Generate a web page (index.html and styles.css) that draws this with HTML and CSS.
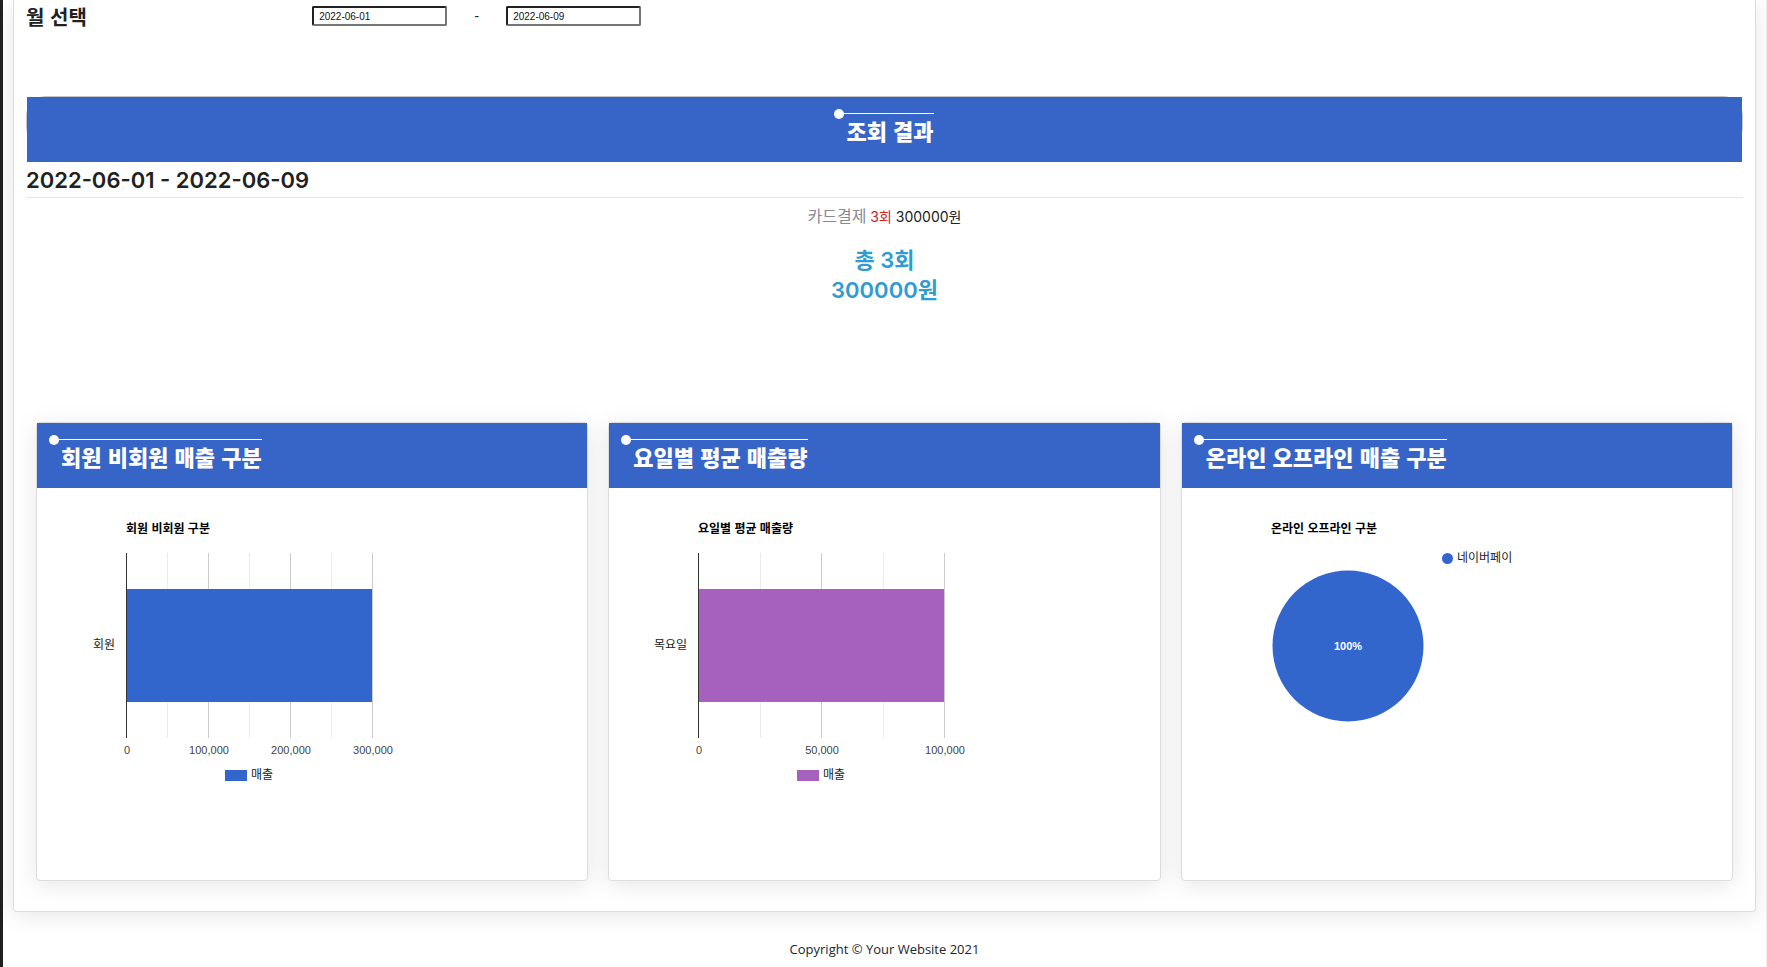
FILE: index.html
```html
<!DOCTYPE html>
<html lang="ko">
<head>
<meta charset="utf-8">
<title>조회 결과</title>
<link rel="stylesheet" href="styles.css">
</head>
<body>
<div class="rail"></div>
<div class="page">
  <main class="panel">
    <form class="month-row">
      <label class="month-label" for="from">월 선택</label>
      <div class="range">
        <input class="date-input" id="from" type="text" value="2022-06-01">
        <span class="range-dash">-</span>
        <input class="date-input" id="to" type="text" value="2022-06-09" aria-label="종료일">
      </div>
    </form>

    <section class="result">
      <div class="banner"><h2 class="title">조회 결과</h2></div>
      <h3 class="period">2022-06-01 - 2022-06-09</h3>
      <p class="detail"><span class="method">카드결제</span> <span class="count">3회</span> <span>300000원</span></p>
      <p class="total">총 3회<br>300000원</p>
    </section>

    <section class="cards">
      <article class="card">
        <div class="card-head"><h2 class="title">회원 비회원 매출 구분</h2></div>
        <div class="card-body">
          <svg class="chart" width="400" height="300" viewBox="0 0 400 300">
            <text class="chart-title" x="73" y="29">회원 비회원 구분</text>
            <path class="minor" d="M114.500 49V234M196.500 49V234M278.500 49V234"/>
            <path class="major" d="M155.500 49V234M237.500 49V234M319.500 49V234"/>
            <rect class="blue" x="74" y="85" width="245" height="113"/>
            <path class="axis" d="M73.500 49V234"/>
            <text class="label end" x="62" y="145">회원</text>
            <text class="tick" x="74" y="250">0</text>
            <text class="tick" x="156" y="250">100,000</text>
            <text class="tick" x="238" y="250">200,000</text>
            <text class="tick" x="320" y="250">300,000</text>
            <rect class="blue" x="172" y="266" width="22" height="11"/>
            <text class="label" x="198" y="275">매출</text>
          </svg>
        </div>
      </article>
      <article class="card">
        <div class="card-head"><h2 class="title">요일별 평균 매출량</h2></div>
        <div class="card-body">
          <svg class="chart" width="400" height="300" viewBox="0 0 400 300">
            <text class="chart-title" x="73" y="29">요일별 평균 매출량</text>
            <path class="minor" d="M135.500 49V234M258.500 49V234"/>
            <path class="major" d="M196.500 49V234M319.500 49V234"/>
            <rect class="purple" x="74" y="85" width="245" height="113"/>
            <path class="axis" d="M73.500 49V234"/>
            <text class="label end" x="62" y="145">목요일</text>
            <text class="tick" x="74" y="250">0</text>
            <text class="tick" x="197" y="250">50,000</text>
            <text class="tick" x="320" y="250">100,000</text>
            <rect class="purple" x="172" y="266" width="22" height="11"/>
            <text class="label" x="198" y="275">매출</text>
          </svg>
        </div>
      </article>
      <article class="card">
        <div class="card-head"><h2 class="title">온라인 오프라인 매출 구분</h2></div>
        <div class="card-body">
          <svg class="chart" width="400" height="300" viewBox="0 0 400 300">
            <text class="chart-title" x="73" y="29">온라인 오프라인 구분</text>
            <circle class="blue" cx="150" cy="142" r="75.500"/>
            <text class="slice" x="150" y="146">100%</text>
            <circle class="blue" cx="249.500" cy="54.500" r="5.500"/>
            <text class="label" x="259" y="58">네이버페이</text>
          </svg>
        </div>
      </article>
    </section>
  </main>
  <footer class="footer">Copyright © Your Website 2021</footer>
</div>
</body>
</html>
```

FILE: styles.css
```css
* { box-sizing: border-box; }

body {
  margin: 0;
  display: flex;
  min-height: 100vh;
  background: #fff;
  color: #212529;
  font-family: Inter, "Noto Sans CJK KR", sans-serif;
}

h2, h3, p { margin: 0; }

.rail { flex: 0 0 3px; background: #212121; }

.page {
  flex: 1;
  min-width: 0;
  padding: 0 10px;
  border-right: 1px solid #f0f0f0;
}

.panel {
  padding: 0 12px 30px;
  border: 1px solid #ddd;
  border-top: 0;
  border-radius: 0 0 4px 4px;
  background: #fff;
  box-shadow: 0 4px 24px rgba(0, 0, 0, .1);
}

.month-row {
  display: grid;
  grid-template-columns: 1fr 5fr;
  align-items: center;
  height: 32px;
}

.month-label {
  padding-top: 2px;
  font: 700 20px/30px "Noto Sans CJK KR", sans-serif;
  color: #212121;
}

.range { display: flex; align-items: center; }

.date-input {
  width: 135px;
  height: 20px;
  padding: 0 5px;
  border: 2px solid #767676;
  border-top-color: #212121;
  border-left-color: #212121;
  border-radius: 2px;
  background: #fff;
  color: #111;
  font: 10px/16px "Liberation Sans", sans-serif;
}

.range-dash {
  width: 59px;
  text-align: center;
  font: 14px/20px "Noto Sans", sans-serif;
}

.result {
  position: relative;
  z-index: 0;
  margin-top: 65px;
  text-align: center;
}

.banner, .card-head {
  padding: 16px 13px;
  background: #3665c7;
}

.banner { margin: 0 1px; }

.banner::before {
  content: "";
  position: absolute;
  z-index: -1;
  top: -1px;
  left: 0;
  right: 0;
  height: 49px;
  border: 1px solid #c4c4c4;
  border-radius: 20px;
}

.title {
  position: relative;
  display: block;
  width: fit-content;
  padding-left: 11px;
  border-top: 1px solid #fff;
  color: #fff;
  font: 900 22px/32px "Noto Sans CJK KR", sans-serif;
}

.banner .title { margin: 0 auto; }

.title::before {
  content: "";
  position: absolute;
  top: -5px;
  left: -1px;
  width: 10px;
  height: 10px;
  border-radius: 50%;
  background: #fff;
}

.period {
  padding-top: 2px;
  border-bottom: 1px solid #e3e3f3;
  text-align: left;
  font-size: 22px;
  font-weight: 600;
  line-height: 33px;
  color: #212121;
}

.detail {
  padding-top: 5px;
  font-size: 14px;
  line-height: 26px;
  color: #212121;
}

.method { font-size: 16px; color: #888896; }
.count { color: #d01c1c; }

.total {
  margin-top: 15px;
  font-size: 22px;
  font-weight: 600;
  line-height: 30px;
  color: #2e9bd2;
}

.cards {
  display: grid;
  grid-template-columns: repeat(3, 1fr);
  gap: 20px;
  margin-top: 117px;
  padding: 0 10px;
}

.card {
  border: 1px solid #ddd;
  border-radius: 4px;
  background: #fff;
  box-shadow: 0 4px 24px rgba(0, 0, 0, .1);
}

.card-body { min-height: 392px; padding: 16px; }

.chart { display: block; max-width: 100%; }
.chart text { font-family: "Liberation Sans", "Noto Sans CJK KR", sans-serif; }
.chart-title { font-size: 12px; font-weight: 700; fill: #000; }
.label { font-size: 12px; fill: #222; }
.end { text-anchor: end; }
.tick { font-size: 11px; text-anchor: middle; fill: #444; }
.slice { font-size: 11px; font-weight: 700; text-anchor: middle; fill: #fff; }
.minor { stroke: #ebebeb; }
.major { stroke: #ccc; }
.axis { stroke: #333; }
.blue { fill: #3366cc; }
.purple { fill: #a561bd; }

.footer {
  padding: 27px 0 7px;
  text-align: center;
  font: 13px/21px "Open Sans", sans-serif;
}
```
